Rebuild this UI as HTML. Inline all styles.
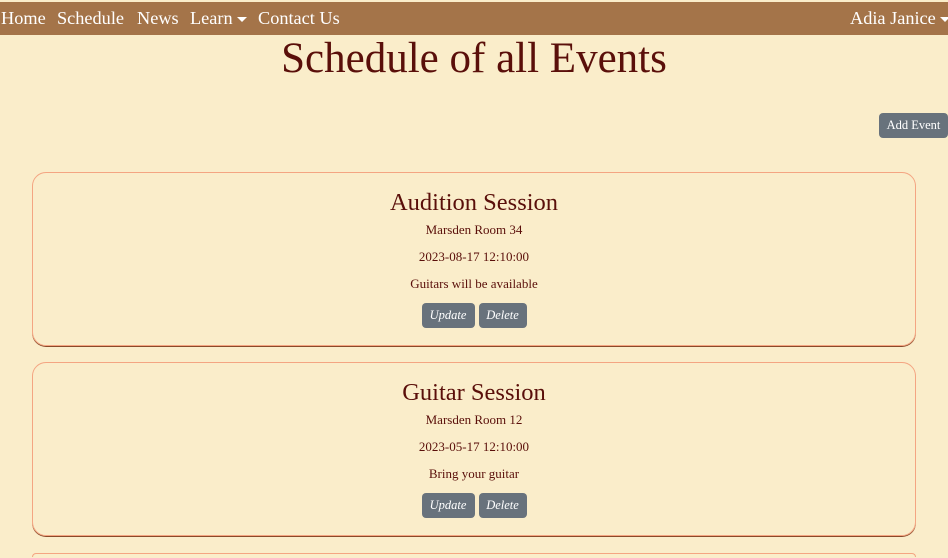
<!DOCTYPE html>
<html style="overflow:hidden;height:558px"><head><style>
body{margin:0;width:948px;height:558px;overflow:hidden;background:#faedca;font-family:"Liberation Serif",serif;color:#5a0f0a;position:relative}
.nav{position:absolute;top:2px;left:0;width:948px;height:33px;background:#a47449;color:#fff;font-size:18.3px}
.nav span{position:absolute;top:6px;white-space:nowrap}
.car{display:inline-block;width:0;height:0;border-left:5px solid transparent;border-right:5px solid transparent;border-top:5px solid #fff;vertical-align:middle;margin-left:4px}
h1{position:absolute;top:34px;left:0;width:948px;text-align:center;margin:0;font-weight:normal;font-size:43px;color:#5a0f0a}
.btn{background:#68727c;color:#fff;border-radius:4px;font-size:12.5px;display:inline-block;text-align:center;line-height:25px;height:25px}
.card{position:absolute;left:32px;width:882px;height:172px;border:1.5px solid #f4a582;border-radius:14px;box-shadow:0 1px 0 #8a4a2a;text-align:center}
.card h2{margin:17px 0 0;font-weight:normal;font-size:24.5px;line-height:26px}
.card p{margin:0;font-size:13px;position:absolute;width:100%}
.card .b{position:absolute;width:100%;top:130px}
</style></head><body>
<div class="nav">
<span style="left:1px">Home</span><span style="left:57px">Schedule</span><span style="left:137px">News</span><span style="left:190px">Learn<i class="car"></i></span><span style="left:258px">Contact Us</span>
<span style="left:850px">Adia Janice<i class="car"></i></span>
</div>
<h1>Schedule of all Events</h1>
<div class="btn" style="position:absolute;left:879px;top:113px;width:69px;">Add Event</div>
<div class="card" style="top:172px">
<h2>Audition Session</h2>
<p style="top:49px">Marsden Room 34</p>
<p style="top:76px">2023-08-17 12:10:00</p>
<p style="top:103px">Guitars will be available</p>
<div class="b"><span class="btn" style="width:53px;font-style:italic">Update</span> <span class="btn" style="width:48px;font-style:italic">Delete</span></div>
</div>
<div class="card" style="top:362px">
<h2>Guitar Session</h2>
<p style="top:49px">Marsden Room 12</p>
<p style="top:76px">2023-05-17 12:10:00</p>
<p style="top:103px">Bring your guitar</p>
<div class="b"><span class="btn" style="width:53px;font-style:italic">Update</span> <span class="btn" style="width:48px;font-style:italic">Delete</span></div>
</div>
<div class="card" style="top:553px;height:3px;box-shadow:none;border-bottom:none;border-radius:14px 14px 0 0"></div>
</body></html>
